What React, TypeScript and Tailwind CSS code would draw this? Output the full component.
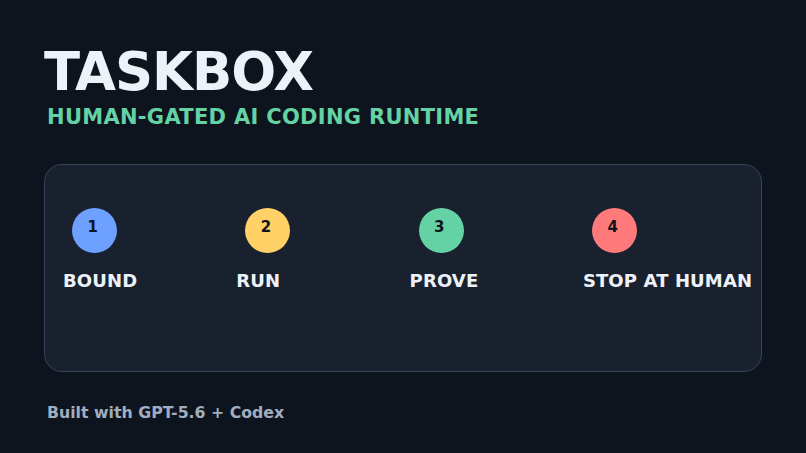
const steps = [
  { n: '1', label: 'BOUND', color: 'bg-[#6ea0ff]' },
  { n: '2', label: 'RUN', color: 'bg-[#ffd166]' },
  { n: '3', label: 'PROVE', color: 'bg-[#64d2a4]' },
  { n: '4', label: 'STOP AT HUMAN', color: 'bg-[#ff7b7b]' },
];

export default function App() {
  return (
    <div className="w-[806px] h-[453px] overflow-hidden bg-[#0e141e] pt-[41px] pl-[44px] font-['DejaVu_Sans',sans-serif] font-bold">
      <h1 className="text-[52.9px] leading-[62px] tracking-[-1px] text-[#edf2f9]">TASKBOX</h1>
      <p className="mt-[2px] ml-[3px] text-[21px] leading-[25px] tracking-[0.3px] text-[#64d2a4]">HUMAN-GATED AI CODING RUNTIME</p>

      <div className="mt-[34px] w-[718px] h-[208px] rounded-[18px] border border-[#374357] bg-[#1a212e] pt-[43px] pl-[18px] flex">
        {steps.map((step) => (
          <div key={step.n} className="w-[173.3px] shrink-0">
            <div className={`ml-[9px] w-[45px] h-[45px] rounded-full pt-[9px] pl-[15.5px] text-[15px] leading-[20px] text-[#0e141e] ${step.color}`}>
              {step.n}
            </div>
            <div className="mt-[16px] text-[18px] leading-[24px] tracking-[0.12px] whitespace-nowrap text-[#edf2f9]">{step.label}</div>
          </div>
        ))}
      </div>

      <p className="mt-[31px] ml-[3px] text-[15.75px] leading-[20px] text-[#a0aec0]">Built with GPT-5.6 + Codex</p>
    </div>
  );
}
